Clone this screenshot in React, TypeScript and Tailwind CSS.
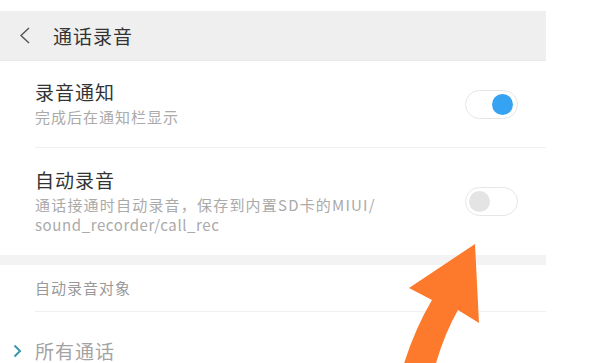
import React from 'react';

const Toggle: React.FC<{ on?: boolean }> = ({ on = false }) => (
  <div className="mr-[28px] flex h-[29px] w-[53px] shrink-0 items-center rounded-full border border-[#e6e6e6] bg-white px-[3px]">
    {on ? (
      <div className="ml-auto mr-[1px] h-[21px] w-[21px] rounded-full bg-[#36a3f2]" />
    ) : (
      <div className="h-[21px] w-[21px] rounded-full bg-[#e4e4e4]" />
    )}
  </div>
);

const App: React.FC = () => {
  return (
    <div className="relative h-[363px] w-[591px] overflow-hidden bg-white font-['Noto_Sans_CJK_SC',sans-serif]">
      <div className="w-[546px] pt-[11px]">
        {/* header */}
        <div className="flex h-[50px] items-center border-b border-[#e9e9e9] bg-[#efefef]">
          <svg className="ml-[19px] h-[17px] w-[12px]" viewBox="0 0 12 17">
            <polyline points="10,1 2,8.5 10,16" fill="none" stroke="#555" strokeWidth="1.4" />
          </svg>
          <span className="ml-[22px] text-[19px] leading-[24px] tracking-[1px] text-[#333]">通话录音</span>
        </div>

        {/* 录音通知 */}
        <div className="flex h-[86px] items-center justify-between">
          <div className="ml-[35px] mt-[-2px]">
            <div className="text-[19px] leading-[26px] tracking-[1px] text-[#333]">录音通知</div>
            <div className="mt-[2px] text-[15px] leading-[20px] tracking-[1px] text-[#aaa]">完成后在通知栏显示</div>
          </div>
          <Toggle on />
        </div>
        <div className="ml-[35px] h-px bg-[#f0f0f0]" />

        {/* 自动录音 */}
        <div className="flex h-[107px] items-center justify-between">
          <div className="ml-[35px] mt-[-2px]">
            <div className="text-[19px] leading-[26px] tracking-[1px] text-[#333]">自动录音</div>
            <div className="mt-[2px] text-[15px] leading-[20px] text-[#aaa]">
              <div className="tracking-[1.2px]">通话接通时自动录音，保存到内置SD卡的MIUI/</div>
              <div className="tracking-[0.6px]">sound_recorder/call_rec</div>
            </div>
          </div>
          <Toggle />
        </div>

        <div className="h-[10px] bg-[#f3f3f3]" />

        {/* 自动录音对象 */}
        <div className="flex h-[46px] items-center">
          <span className="ml-[35px] text-[15px] leading-[20px] tracking-[1px] text-[#999]">自动录音对象</span>
        </div>
        <div className="ml-[35px] h-px bg-[#f0f0f0]" />

        <div className="mt-[27px] flex items-center">
          <svg className="ml-[13px] h-[14px] w-[9px]" viewBox="0 0 9 14">
            <polyline points="1.5,1.5 7,7 1.5,12.5" fill="none" stroke="#3a98ae" strokeWidth="2" />
          </svg>
          <span className="ml-[13px] text-[19px] leading-[24px] tracking-[1px] text-[#a3a3a3]">所有通话</span>
        </div>
      </div>

      {/* orange arrow overlay */}
      <svg className="pointer-events-none absolute left-0 top-0" width="591" height="363" viewBox="0 0 591 363">
        <path
          d="M475,244 L479,323 L458,310 Q444,334 434,370 L402,370 Q414,330 432,300 L409,288 Z"
          fill="#fd792b"
        />
      </svg>
    </div>
  );
};

export default App;
